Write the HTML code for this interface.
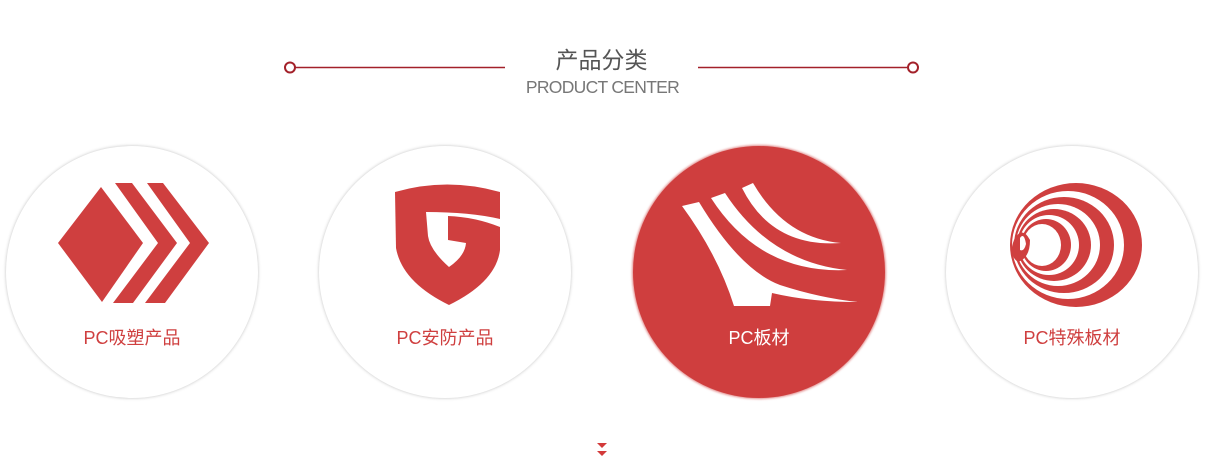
<!DOCTYPE html>
<html><head><meta charset="utf-8"><style>
body{margin:0;width:1205px;height:464px;background:#fff;position:relative;overflow:hidden;font-family:"Liberation Sans","Noto Sans CJK SC",sans-serif}
.t{position:absolute;left:0;width:1205px;text-align:center}
.c{position:absolute;top:146px;width:252px;height:252px;border-radius:50%;box-shadow:0 0 3px rgba(0,0,0,.25);background:#fff}
.l{position:absolute;top:324px;width:252px;text-align:center;font-size:18px;color:#cf3f3f;font-family:"Liberation Sans","Noto Sans CJK SC",sans-serif}
</style></head><body>
<div class="t" style="top:41px;font-size:23px;color:#555;left:-1px">产品分类</div>
<div class="t" style="top:77px;font-size:17.5px;color:#777;letter-spacing:-0.7px">PRODUCT CENTER</div>
<div class="c" style="left:6px"></div>
<div class="c" style="left:319px"></div>
<div class="c" style="left:633px;background:#cf3e3e;box-shadow:0 0 2px 1px rgba(207,62,62,.6)"></div>
<div class="c" style="left:946px"></div>
<svg width="1205" height="464" style="position:absolute;left:0;top:0">
<g stroke="#a3212a" stroke-width="1.5" fill="none">
<line x1="295" y1="67.5" x2="505" y2="67.5"/><line x1="698" y1="67.5" x2="907" y2="67.5"/>
<circle cx="290" cy="67.5" r="5" stroke-width="2"/><circle cx="913" cy="67.5" r="5" stroke-width="2"/>
</g>
<g fill="#cf3f3f">
<polygon points="58,243 101,187 143,243 102,302"/>
<polygon points="115,183 132,183 177,243 133,303 113,303 158,243"/>
<polygon points="147,183 163,183 209,243 165,303 145,303 190,243"/>
<path d="M395,192 Q447,177 500,192 L500,250 Q496,282 449,305 Q402,282 396,248 Z"/>
</g>
<path fill="#fff" d="M426,212 Q470,212 500,219 L500,227 Q475,217 448,216 L448,240 L466,243 Q465,256 449,267 Q430,250 428,236 Z"/>
<g fill="#fff">
<path d="M682,206 L699,202 Q740,270 780,285 Q820,298 858,302 Q810,302 772,293 L770,306 L734,306 Q718,255 682,206 Z"/>
<path d="M711,198 L725,193 Q770,262 847,270 Q760,274 711,198Z"/>
<path d="M742,188 L753,183 Q785,238 841,243 Q772,248 742,188Z"/>
</g>
<g>
<ellipse cx="1076" cy="245" rx="66" ry="62" fill="#cf3f3f"/>
<ellipse cx="1068" cy="245" rx="56" ry="54" fill="#fff"/>
<ellipse cx="1064" cy="245" rx="50" ry="48" fill="#cf3f3f"/>
<ellipse cx="1058" cy="245" rx="42" ry="41" fill="#fff"/>
<ellipse cx="1054" cy="245" rx="37" ry="36" fill="#cf3f3f"/>
<ellipse cx="1049" cy="245" rx="30" ry="30" fill="#fff"/>
<ellipse cx="1046" cy="245" rx="25" ry="26" fill="#cf3f3f"/>
<ellipse cx="1042" cy="245" rx="19" ry="21" fill="#fff"/>
<path d="M1014,240 Q1022,225 1030,240 Q1030,258 1018,262 Q1008,255 1014,240Z" fill="#cf3f3f"/>
<path d="M1020,238 Q1024,232 1026,244 Q1024,252 1020,250Z" fill="#fff"/>
</g>
<g fill="#d33a3a"><polygon points="597,443 607,443 602,448"/><polygon points="597,451 607,451 602,456"/></g>
</svg>
<div class="l" style="left:6px">PC吸塑产品</div>
<div class="l" style="left:319px">PC安防产品</div>
<div class="l" style="left:633px;color:#fff">PC板材</div>
<div class="l" style="left:946px">PC特殊板材</div>
</body></html>
